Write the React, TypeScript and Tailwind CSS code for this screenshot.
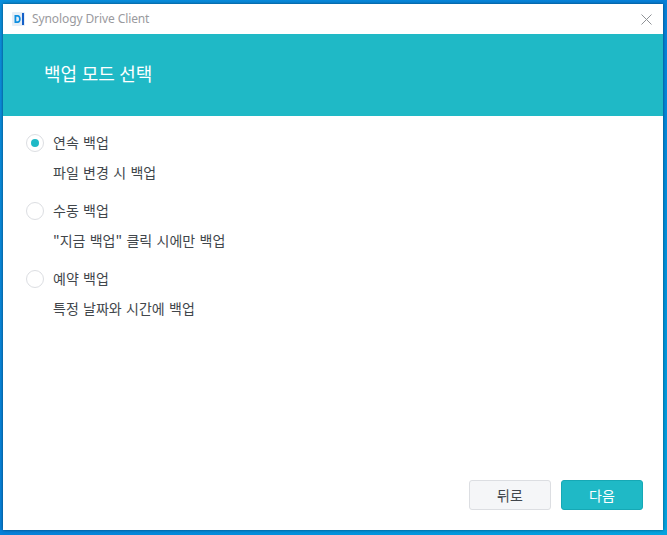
const font = { fontFamily: '"Noto Sans CJK KR", "Noto Sans", sans-serif' };

function BackupOption({ title, desc, checked }: { title: string; desc: string; checked?: boolean }) {
  return (
    <div className="flex flex-col">
      <div className="flex h-[18px] items-center">
        <span className="flex h-[18px] w-[18px] shrink-0 items-center justify-center rounded-full border border-[#dcdee2] bg-white">
          {checked && <span className="h-[8px] w-[8px] rounded-full bg-[#1fb9c6]" />}
        </span>
        <span className="ml-[9px] mt-[-2px] text-[14px] leading-[18px] text-[#41464b] [word-spacing:1.2px]">{title}</span>
      </div>
      <div className="mt-[11px] mb-[1px] ml-[27px] text-[14px] leading-[18px] text-[#41464b] [word-spacing:1.2px]">{desc}</div>
    </div>
  );
}

export default function App() {
  return (
    <div
      className="flex h-[535px] w-[667px] bg-gradient-to-br from-[#0a8fdc] via-[#0780d8] to-[#05a4e0] pt-[4px] pr-[4px] pb-[5px] pl-[3px]"
      style={font}
    >
      <div className="flex flex-1 flex-col bg-white shadow-[0_0_3px_rgba(0,0,0,0.5)]">
        {/* title bar */}
        <div className="flex h-[30px] items-center pr-[12px] pl-[9px]">
          <svg width="13" height="14" viewBox="0 0 13 14" className="shrink-0">
            <rect x="0" y="0" width="13" height="14" rx="1" fill="#e6eef6" />
            <path d="M2.5 3h3.2c2 0 3 1.700 3 4s-1 4-3 4H2.500z M4.300 4.700v4.600h1.300c1 0 1.400-1 1.400-2.300s-.4-2.300-1.400-2.300z" fill="#0f8fe0" fillRule="evenodd" />
            <rect x="10" y="1" width="2" height="12" fill="#1560c8" />
          </svg>
          <span
            className="ml-[7px] text-[12px] leading-[16px] tracking-[-0.1px] text-[#9a9a9e]"
            style={{ fontFamily: '"Noto Sans", sans-serif' }}
          >
            Synology Drive Client
          </span>
          <svg width="11" height="11" viewBox="0 0 11 11" className="mr-[-1px] ml-auto" stroke="#8f9296" strokeWidth="1">
            <path d="M0.500 0.500l10 10M10.500 0.500l-10 10" fill="none" />
          </svg>
        </div>

        {/* header */}
        <div className="flex h-[82px] items-center bg-[#1fb9c6] pb-[5px] pl-[41px]">
          <h1 className="text-[18px] leading-[22px] font-normal text-white [word-spacing:0.5px]">백업 모드 선택</h1>
        </div>

        {/* options */}
        <div className="flex flex-1 flex-col gap-[20px] pt-[18px] pl-[23px]">
          <BackupOption title="연속 백업" desc="파일 변경 시 백업" checked />
          <BackupOption title="수동 백업" desc={'"지금 백업" 클릭 시에만 백업'} />
          <BackupOption title="예약 백업" desc="특정 날짜와 시간에 백업" />
        </div>

        {/* footer */}
        <div className="flex justify-end gap-[10px] pr-[20px] pb-[20px]">
          <button className="h-[30px] w-[82px] rounded-[3px] border border-[#dcdee2] bg-[#f5f6f8] text-[14px] text-[#41464b]">
            뒤로
          </button>
          <button className="h-[30px] w-[82px] rounded-[3px] border border-[#16a8b5] bg-[#1fb9c6] text-[14px] text-white">
            다음
          </button>
        </div>
      </div>
    </div>
  );
}
